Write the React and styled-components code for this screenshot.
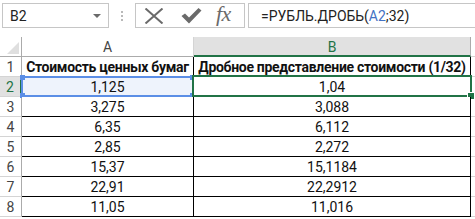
import React from "react";
import styled, { createGlobalStyle } from "styled-components";

const Global = createGlobalStyle`
  html, body { margin: 0; padding: 0; background: #fff; }
  body { width: 475px; height: 219px; overflow: hidden; font-family: "Roboto", "Noto Sans", sans-serif; }
`;

const Page = styled.div`
  width: 475px;
  height: 219px;
  overflow: hidden;
  background: #fff;
`;

const Toolbar = styled.div`
  display: flex;
  align-items: stretch;
  height: 25px;
  padding: 3px 0 0 2px;
`;

const NameBox = styled.div`
  box-sizing: border-box;
  width: 107px;
  border: 1px solid #c6c6c6;
  display: flex;
  align-items: center;
  justify-content: space-between;
  padding: 0 7px 0 7px;
  font-size: 14px;
  color: #222;
`;

const DropArrow = styled.div`
  width: 0;
  height: 0;
  border-left: 4px solid transparent;
  border-right: 4px solid transparent;
  border-top: 4px solid #6a6a6a;
  margin-top: 1px;
`;

const Dots = styled.div`
  width: 26px;
  display: flex;
  flex-direction: column;
  align-items: center;
  justify-content: center;
  gap: 2px;
  span { width: 2px; height: 2px; background: #b9b9b9; }
`;

const IconBox = styled.div`
  box-sizing: border-box;
  width: 110px;
  border: 1px solid #c6c6c6;
  display: flex;
  align-items: center;
  padding-left: 8px;
`;

const IconSlot = styled.div`
  width: ${p => p.w}px;
  display: flex;
  align-items: center;
  justify-content: flex-start;
`;

const Fx = styled.span`
  font-family: "Liberation Serif", "DejaVu Serif", serif;
  font-style: italic;
  font-size: 22px;
  color: #6a6a6a;
  letter-spacing: -0.5px;
  margin-top: -3px;
`;

const FormulaBox = styled.div`
  box-sizing: border-box;
  flex: 1;
  margin-left: 3px;
  border: 1px solid #c6c6c6;
  border-right: none;
  display: flex;
  align-items: center;
  padding-left: 12px;
  font-size: 14px;
  color: #222;
`;

const Ref = styled.span`
  color: #4472c4;
`;

const Sheet = styled.div`
  margin-top: 9px;
  display: grid;
  grid-template-columns: 22px 172px 277px 4px;
  grid-auto-rows: 20px;
  font-size: 14px;
`;

const Corner = styled.div`
  box-sizing: border-box;
  position: relative;
  border-right: 1px solid #ababab;
  border-bottom: 1px solid #ababab;
  background: #fff;
  &::after {
    content: "";
    position: absolute;
    right: 2px;
    bottom: 2px;
    width: 0;
    height: 0;
    border-left: 12px solid transparent;
    border-bottom: 12px solid #dfdfdf;
  }
`;

const ColHead = styled.div`
  box-sizing: border-box;
  display: flex;
  align-items: center;
  justify-content: center;
  background: ${p => (p.sel ? "#e1e1e1" : "#fff")};
  color: ${p => (p.sel ? "#217346" : "#444")};
  border-right: 1px solid ${p => (p.sel ? "#ababab" : "#d4d4d4")};
  border-bottom: ${p => (p.sel ? "2px solid #217346" : "1px solid #ababab")};
  font-size: 14px;
  padding-top: ${p => (p.sel ? "1px" : "0")};
`;

const RowHead = styled.div`
  box-sizing: border-box;
  display: flex;
  align-items: center;
  justify-content: center;
  background: ${p => (p.sel ? "#e1e1e1" : "#fff")};
  color: ${p => (p.sel ? "#217346" : "#444")};
  border-right: ${p => (p.sel ? "2px solid #217346" : "1px solid #ababab")};
  border-bottom: 1px solid #d4d4d4;
  font-size: 14px;
`;

const Cell = styled.div`
  box-sizing: border-box;
  position: relative;
  display: flex;
  align-items: center;
  justify-content: center;
  white-space: nowrap;
  color: #111;
  font-weight: ${p => (p.bold ? 700 : 400)};
  letter-spacing: ${p => (p.bold ? "-0.3px" : "0")};
  border-right: 1px solid #000;
  border-bottom: 1px solid #000;
  background: ${p => (p.refSel ? "#eef3fc" : "#fff")};
  padding-top: 1px;
`;

const Empty = styled.div`
  box-sizing: border-box;
  border-bottom: 1px solid #d4d4d4;
  background: #fff;
`;

const RefFrame = styled.div`
  position: absolute;
  left: -1px;
  top: -1px;
  right: -1px;
  bottom: -1px;
  border: 2px solid #5b8ee6;
  pointer-events: none;
  span {
    position: absolute;
    width: 5px;
    height: 5px;
    background: #5b8ee6;
  }
`;

const ActiveFrame = styled.div`
  position: absolute;
  left: -2px;
  top: -2px;
  right: -2px;
  bottom: -1px;
  border: 2px solid #217346;
  pointer-events: none;
`;

const Handle = styled.div`
  position: absolute;
  right: -5px;
  bottom: -5px;
  width: 6px;
  height: 6px;
  background: #217346;
  border: 1px solid #fff;
`;

const rows = [
  ["1,125", "1,04"],
  ["3,275", "3,088"],
  ["6,35", "6,112"],
  ["2,85", "2,272"],
  ["15,37", "15,1184"],
  ["22,91", "22,2912"],
  ["11,05", "11,016"],
];

const XIcon = () => (
  <svg width="20" height="16" viewBox="0 0 20 16">
    <path d="M1.5 0.5 L18.5 15.5 M18.5 0.5 L1.5 15.5" stroke="#6a6a6a" strokeWidth="2" fill="none" />
  </svg>
);

const CheckIcon = () => (
  <svg width="21" height="17" viewBox="0 0 21 17">
    <path d="M0.5 9 L4 6.5 L8 10.5 L17.5 1 L20.5 3.5 L8 16.5 Z" fill="#6a6a6a" />
  </svg>
);

export default function App() {
  return (
    <Page>
      <Global />
      <Toolbar>
        <NameBox>
          <span>B2</span>
          <DropArrow />
        </NameBox>
        <Dots>
          <span />
          <span />
          <span />
        </Dots>
        <IconBox>
          <IconSlot w={37}><XIcon /></IconSlot>
          <IconSlot w={35}><CheckIcon /></IconSlot>
          <IconSlot w={26}><Fx>fx</Fx></IconSlot>
        </IconBox>
        <FormulaBox>
          =РУБЛЬ.ДРОБЬ(<Ref>A2</Ref>;32)
        </FormulaBox>
      </Toolbar>
      <Sheet>
        <Corner />
        <ColHead>A</ColHead>
        <ColHead sel>B</ColHead>
        <Empty />

        <RowHead>1</RowHead>
        <Cell bold>Стоимость ценных бумаг</Cell>
        <Cell bold>Дробное представление стоимости (1/32)</Cell>
        <Empty />

        {rows.map((r, i) => (
          <React.Fragment key={i}>
            <RowHead sel={i === 0}>{i + 2}</RowHead>
            <Cell refSel={i === 0}>
              {r[0]}
              {i === 0 && (
                <RefFrame>
                  <span style={{ left: -3, top: -3 }} />
                  <span style={{ right: -3, top: -3 }} />
                  <span style={{ left: -3, bottom: -3 }} />
                  <span style={{ right: -3, bottom: -3 }} />
                </RefFrame>
              )}
            </Cell>
            <Cell>
              {r[1]}
              {i === 0 && (
                <ActiveFrame>
                  <Handle />
                </ActiveFrame>
              )}
            </Cell>
            <Empty />
          </React.Fragment>
        ))}
      </Sheet>
    </Page>
  );
}
